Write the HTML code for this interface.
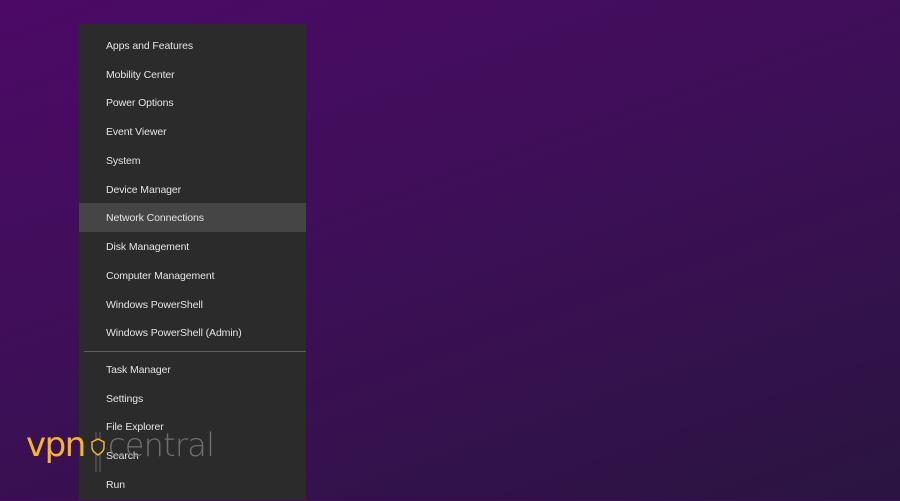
<!DOCTYPE html>
<html><head><style>
body{margin:0;width:900px;height:500px;overflow:hidden;background:linear-gradient(160deg,#4c0a66 0%,#3e0f58 45%,#2a1441 100%);font-family:"Liberation Sans",sans-serif;position:relative}
.menu{position:absolute;left:79px;top:24px;width:227px;height:476px;background:#2b2b2b}
.it{position:absolute;left:0;width:227px;height:29px;line-height:31px;padding-left:27px;box-sizing:border-box;color:#e4e4e4;font-size:10.5px;letter-spacing:-0.1px}
.hl{background:#454545}
.sep{position:absolute;left:5px;width:222px;top:327px;height:1px;background:#5e5e5e}
</style></head><body>
<div class="menu">
<div class="it" style="top:7px">Apps and Features</div>
<div class="it" style="top:35.5px">Mobility Center</div>
<div class="it" style="top:64px">Power Options</div>
<div class="it" style="top:93px">Event Viewer</div>
<div class="it" style="top:122px">System</div>
<div class="it" style="top:150.5px">Device Manager</div>
<div class="it hl" style="top:179px">Network Connections</div>
<div class="it" style="top:208px">Disk Management</div>
<div class="it" style="top:237px">Computer Management</div>
<div class="it" style="top:265.5px">Windows PowerShell</div>
<div class="it" style="top:294px">Windows PowerShell (Admin)</div>
<div class="sep"></div>
<div class="it" style="top:331px">Task Manager</div>
<div class="it" style="top:360px">Settings</div>
<div class="it" style="top:388px">File Explorer</div>
<div class="it" style="top:417px">Search</div>
<div class="it" style="top:446px">Run</div>
</div>
<div style="position:absolute;left:26px;top:425px;font-size:34px;color:#f5b529;font-family:'DejaVu Sans',sans-serif;letter-spacing:-1.5px;line-height:40px">vpn</div>
<svg style="position:absolute;left:88px;top:430px" width="20" height="45" viewBox="0 0 20 45">
<path d="M8 2v40M12 2v40" stroke="#666" stroke-width="1"/>
<path d="M4 12l6-3 6 3v5c0 4-3 6-6 8-3-2-6-4-6-8z" fill="#2b2b2b" stroke="#f5b529" stroke-width="1.5"/>
</svg>
<div style="position:absolute;left:108px;top:425px;font-size:32px;color:#707070;font-family:'DejaVu Sans',sans-serif;font-weight:200;line-height:40px;letter-spacing:-0.8px">central</div>
</body></html>
